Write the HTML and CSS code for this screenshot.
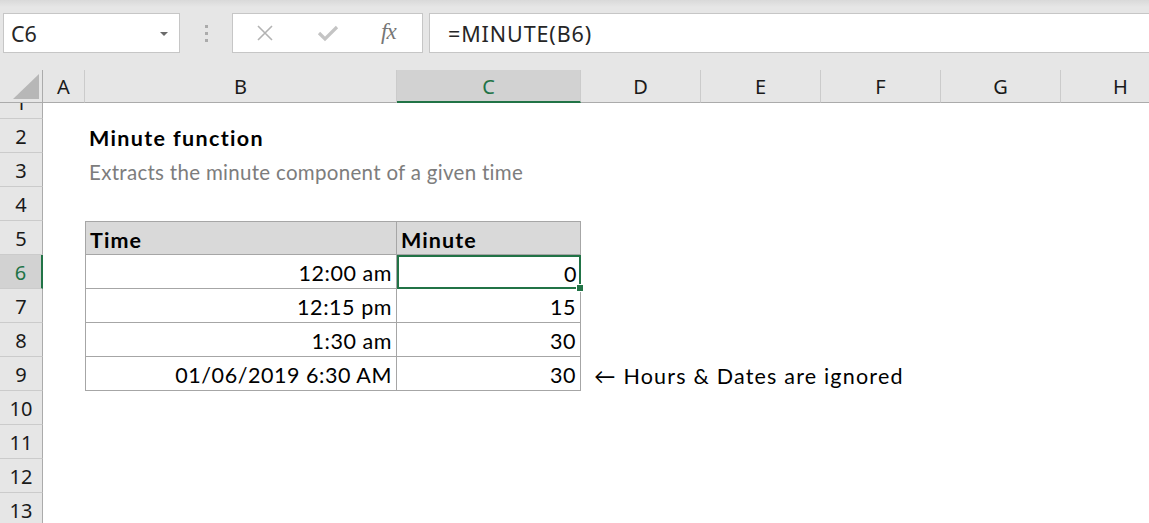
FILE: index.html
```html
<!DOCTYPE html>
<html>
<head>
<meta charset="utf-8">
<link rel="stylesheet" href="styles.css">
</head>
<body>
<div class="app">
  <div class="toolbar">
    <div class="namebox"><span class="ref">C6</span><span class="caret"></span></div>
    <div class="grip"><i></i><i></i><i></i></div>
    <div class="fxbox">
      <svg class="ico-x" width="18" height="18" viewBox="0 0 18 18"><path d="M2 2 L16 16 M16 2 L2 16" stroke="#b3b3b3" stroke-width="1.6" fill="none"/></svg>
      <svg class="ico-check" width="22" height="18" viewBox="0 0 22 18"><path d="M2 9 L8 15 L20 3" stroke="#c4c4c4" stroke-width="3.2" fill="none"/></svg>
      <span class="fx">fx</span>
    </div>
    <div class="formula">=MINUTE(B6)</div>
  </div>

  <div class="row head">
    <div class="corner"><div class="tri"></div></div>
    <div class="ch">A</div>
    <div class="ch">B</div>
    <div class="ch sel">C</div>
    <div class="ch">D</div>
    <div class="ch">E</div>
    <div class="ch">F</div>
    <div class="ch">G</div>
    <div class="ch">H</div>
  </div>

  <div class="row first"><div class="rh clip"><span>1</span></div></div>
  <div class="row"><div class="rh">2</div><div></div><div class="c title">Minute function</div></div>
  <div class="row"><div class="rh">3</div><div></div><div class="c sub">Extracts the minute component of a given time</div></div>
  <div class="row"><div class="rh">4</div></div>
  <div class="row"><div class="rh">5</div><div></div><div class="c t th tb top">Time</div><div class="c t th top">Minute</div></div>
  <div class="row"><div class="rh sel">6</div><div></div><div class="c t tb num">12:00 am</div><div class="c t num active">0<span class="handle"></span></div></div>
  <div class="row"><div class="rh">7</div><div></div><div class="c t tb num">12:15 pm</div><div class="c t num">15</div></div>
  <div class="row"><div class="rh">8</div><div></div><div class="c t tb num">1:30 am</div><div class="c t num">30</div></div>
  <div class="row"><div class="rh">9</div><div></div><div class="c t tb num">01/06/2019 6:30 AM</div><div class="c t num">30</div><div class="c note">← Hours &amp; Dates are ignored</div></div>
  <div class="row"><div class="rh">10</div></div>
  <div class="row"><div class="rh">11</div></div>
  <div class="row"><div class="rh">12</div></div>
  <div class="row"><div class="rh">13</div></div>
</div>
</body>
</html>
```

FILE: styles.css
```css
* { box-sizing: border-box; }
html, body { margin: 0; padding: 0; background: #ffffff; }
body { overflow: hidden; width: 1149px; height: 523px; }

.app {
  display: flex;
  flex-direction: column;
  width: 1149px;
  height: 523px;
  overflow: hidden;
  font-family: "Noto Sans", "Open Sans", sans-serif;
  color: #222;
}

/* ---------- toolbar ---------- */
.toolbar {
  height: 70px;
  flex: none;
  display: flex;
  align-items: flex-start;
  padding-top: 13px;
  background: linear-gradient(#d9d9d9 0px, #e6e6e6 7px, #e6e6e6 100%);
}
.namebox {
  margin-left: 3px;
  width: 177px;
  height: 40px;
  background: #fff;
  border: 1px solid #c6c6c6;
  display: flex;
  align-items: center;
  justify-content: space-between;
  padding: 0 11px 0 7px;
  font-size: 21.5px;
  color: #262626;
}
.caret {
  width: 0; height: 0;
  border-left: 4px solid transparent;
  border-right: 4px solid transparent;
  border-top: 4px solid #6b6b6b;
  margin-top: 1px;
}
.grip {
  width: 52px;
  height: 40px;
  display: flex;
  flex-direction: column;
  align-items: center;
  justify-content: center;
  gap: 4px;
}
.grip i { display: block; width: 3px; height: 3px; background: #ababab; }
.fxbox {
  width: 191px;
  height: 40px;
  background: #fff;
  border: 1px solid #c6c6c6;
  display: flex;
  align-items: center;
  padding-left: 23px;
}
.ico-x { margin-right: 43px; }
.ico-check { margin-right: 42px; }
.fx {
  font-family: "Liberation Serif", "DejaVu Serif", serif;
  font-style: italic;
  font-size: 23px;
  color: #767676;
  letter-spacing: -1px;
  margin-top: -3px;
}
.formula {
  margin-left: 6px;
  flex: 1;
  height: 40px;
  background: #fff;
  border: 1px solid #c6c6c6;
  border-right: none;
  display: flex;
  align-items: center;
  padding-left: 18px;
  font-size: 21.5px;
  letter-spacing: 0.9px;
  color: #262626;
}

/* ---------- sheet ---------- */
.row {
  display: grid;
  grid-template-columns: 43px 42px 312px 184px repeat(5, 120px);
  height: 34px;
  flex: none;
}
.row.head { height: 33px; }
.row.first { height: 16px; }

.corner {
  background: #e6e6e6;
  border-right: 1px solid #ababab;
  border-bottom: 1px solid #ababab;
  display: flex;
  justify-content: flex-end;
  align-items: flex-end;
  padding: 0 3px 3px 0;
}
.tri {
  width: 26px;
  height: 25px;
  background: #b7b7b7;
  clip-path: polygon(100% 0, 100% 100%, 0 100%);
}
.ch {
  background: #e6e6e6;
  border-right: 1px solid #cbcbcb;
  border-bottom: 1px solid #ababab;
  display: flex;
  align-items: center;
  justify-content: center;
  font-size: 20px;
  color: #1a1a1a;
  padding-top: 1px;
}
.ch.sel {
  background: #d2d2d2;
  color: #217346;
  border-bottom: 2px solid #217346;
}
.rh {
  background: #e6e6e6;
  border-right: 1px solid #ababab;
  border-bottom: 1px solid #cbcbcb;
  display: flex;
  align-items: center;
  justify-content: center;
  font-size: 20px;
  color: #1a1a1a;
  padding-top: 2px;
}
.rh.sel {
  background: #d2d2d2;
  color: #217346;
  border-right: 2px solid #217346;
}
.rh.clip {
  overflow: hidden;
  align-items: flex-end;
  padding-top: 0;
}
.rh.clip span { display: block; line-height: 34px; height: 34px; padding-top: 2px; }

/* ---------- cells ---------- */
.c {
  font-family: "Lato", "Liberation Sans", sans-serif;
  font-size: 21.5px;
  letter-spacing: 0.55px;
  color: #000;
  display: flex;
  align-items: center;
  padding: 3px 4px 0 4px;
  white-space: nowrap;
}
.title { font-weight: 700; letter-spacing: 1.35px; }
.sub { color: #7d7d7d; font-size: 20.5px; letter-spacing: 0.3px; }
.t {
  border-right: 1px solid #a6a6a6;
  border-bottom: 1px solid #a6a6a6;
}
.tb { border-left: 1px solid #a6a6a6; }
.top { border-top: 1px solid #a6a6a6; }
.th { background: #d9d9d9; font-weight: 700; letter-spacing: 1.1px; }
.num { justify-content: flex-end; padding-right: 4px; }
.active {
  position: relative;
  border: 2px solid #217346;
  padding-right: 2px;
}
.handle {
  position: absolute;
  right: -5px;
  bottom: -5px;
  width: 8px;
  height: 8px;
  background: #217346;
  border: 1px solid #fff;
}
.note { padding-left: 13px; overflow: visible; letter-spacing: 1.2px; }
```
